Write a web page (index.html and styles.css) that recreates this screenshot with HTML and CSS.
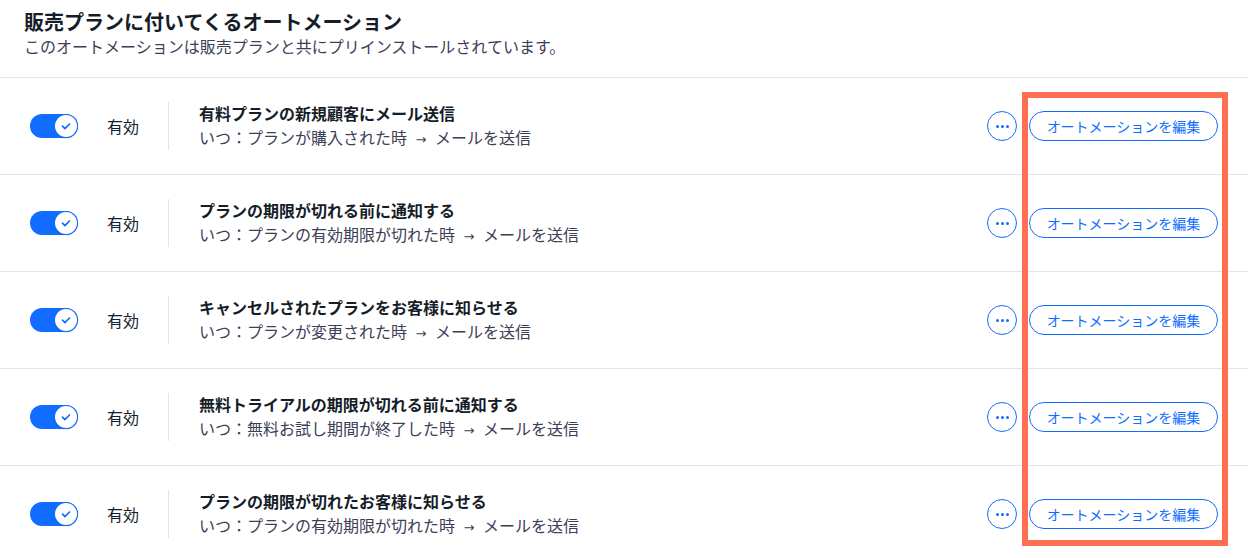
FILE: index.html
```html
<!DOCTYPE html>
<html lang="ja">
<head>
<meta charset="utf-8">
<link rel="stylesheet" href="styles.css">
</head>
<body>
<div class="page">
  <header class="head">
    <h1 class="head-title">販売プランに付いてくるオートメーション</h1>
    <p class="head-sub">このオートメーションは販売プランと共にプリインストールされています。</p>
  </header>
  <ul class="list">
    <li class="row">
      <span class="toggle"><span class="knob"><svg viewBox="0 0 14 14" width="14" height="14"><path d="M3.5 7.2l2.4 2.4L10.5 5" fill="none" stroke="#116dff" stroke-width="1.7" stroke-linecap="round" stroke-linejoin="round"/></svg></span></span>
      <span class="state">有効</span>
      <span class="sep"></span>
      <div class="info">
        <div class="name">有料プランの新規顧客にメール送信</div>
        <div class="desc">いつ：プランが購入された時 <span class="arrow">→</span> メールを送信</div>
      </div>
      <button class="more"><span></span><span></span><span></span></button>
      <button class="edit">オートメーションを編集</button>
    </li>
    <li class="row">
      <span class="toggle"><span class="knob"><svg viewBox="0 0 14 14" width="14" height="14"><path d="M3.5 7.2l2.4 2.4L10.5 5" fill="none" stroke="#116dff" stroke-width="1.7" stroke-linecap="round" stroke-linejoin="round"/></svg></span></span>
      <span class="state">有効</span>
      <span class="sep"></span>
      <div class="info">
        <div class="name">プランの期限が切れる前に通知する</div>
        <div class="desc">いつ：プランの有効期限が切れた時 <span class="arrow">→</span> メールを送信</div>
      </div>
      <button class="more"><span></span><span></span><span></span></button>
      <button class="edit">オートメーションを編集</button>
    </li>
    <li class="row">
      <span class="toggle"><span class="knob"><svg viewBox="0 0 14 14" width="14" height="14"><path d="M3.5 7.2l2.4 2.4L10.5 5" fill="none" stroke="#116dff" stroke-width="1.7" stroke-linecap="round" stroke-linejoin="round"/></svg></span></span>
      <span class="state">有効</span>
      <span class="sep"></span>
      <div class="info">
        <div class="name">キャンセルされたプランをお客様に知らせる</div>
        <div class="desc">いつ：プランが変更された時 <span class="arrow">→</span> メールを送信</div>
      </div>
      <button class="more"><span></span><span></span><span></span></button>
      <button class="edit">オートメーションを編集</button>
    </li>
    <li class="row">
      <span class="toggle"><span class="knob"><svg viewBox="0 0 14 14" width="14" height="14"><path d="M3.5 7.2l2.4 2.4L10.5 5" fill="none" stroke="#116dff" stroke-width="1.7" stroke-linecap="round" stroke-linejoin="round"/></svg></span></span>
      <span class="state">有効</span>
      <span class="sep"></span>
      <div class="info">
        <div class="name">無料トライアルの期限が切れる前に通知する</div>
        <div class="desc">いつ：無料お試し期間が終了した時 <span class="arrow">→</span> メールを送信</div>
      </div>
      <button class="more"><span></span><span></span><span></span></button>
      <button class="edit">オートメーションを編集</button>
    </li>
    <li class="row">
      <span class="toggle"><span class="knob"><svg viewBox="0 0 14 14" width="14" height="14"><path d="M3.5 7.2l2.4 2.4L10.5 5" fill="none" stroke="#116dff" stroke-width="1.7" stroke-linecap="round" stroke-linejoin="round"/></svg></span></span>
      <span class="state">有効</span>
      <span class="sep"></span>
      <div class="info">
        <div class="name">プランの期限が切れたお客様に知らせる</div>
        <div class="desc">いつ：プランの有効期限が切れた時 <span class="arrow">→</span> メールを送信</div>
      </div>
      <button class="more"><span></span><span></span><span></span></button>
      <button class="edit">オートメーションを編集</button>
    </li>
  </ul>
  <div class="highlight"></div>
</div>
</body>
</html>
```

FILE: styles.css
```css
* { box-sizing: border-box; }
html, body {
  margin: 0;
  padding: 0;
  background: #ffffff;
  font-family: "Noto Sans CJK JP", "Noto Sans", sans-serif;
  color: #151d29;
}
.page {
  position: relative;
  width: 1248px;
  height: 558px;
  overflow: hidden;
}
.head {
  height: 78px;
  padding: 9px 24px 0;
  border-bottom: 1px solid #dfe5eb;
}
.head-title {
  margin: 0;
  font-size: 20px;
  line-height: 26px;
  font-weight: 700;
  color: #151d29;
}
.head-sub {
  margin: 0;
  font-size: 16px;
  line-height: 22px;
  color: #3b4057;
}
.list {
  list-style: none;
  margin: 0;
  padding: 0;
}
.row {
  display: flex;
  align-items: center;
  height: 97px;
  padding: 0 30px;
  border-bottom: 1px solid #dfe5eb;
}
.toggle {
  position: relative;
  display: flex;
  align-items: center;
  justify-content: flex-end;
  width: 48px;
  height: 24px;
  border-radius: 12px;
  background: #116dff;
  padding: 1px;
  flex: none;
}
.knob {
  display: flex;
  align-items: center;
  justify-content: center;
  width: 22px;
  height: 22px;
  border-radius: 50%;
  background: #ffffff;
  box-shadow: 0 0 0 1px #116dff, 0 1px 2px rgba(0, 0, 0, 0.25);
}
.state {
  margin-left: 29px;
  font-size: 16px;
  line-height: 24px;
  color: #151d29;
  flex: none;
}
.sep {
  width: 1px;
  height: 48px;
  background: #dfe5eb;
  margin-left: 29px;
  flex: none;
}
.info {
  margin-left: 30px;
  flex: 1;
  display: flex;
  flex-direction: column;
}
.name {
  font-size: 16px;
  line-height: 24px;
  font-weight: 700;
  color: #151d29;
}
.desc {
  font-size: 16px;
  line-height: 24px;
  color: #3b4057;
}
.arrow {
  font-family: "DejaVu Sans", sans-serif;
  font-size: 13px;
  margin: 0 5px;
}
.more {
  display: flex;
  align-items: center;
  justify-content: center;
  gap: 2px;
  width: 30px;
  height: 30px;
  border-radius: 50%;
  border: 1px solid #116dff;
  background: #ffffff;
  padding: 0;
  flex: none;
}
.more span {
  width: 3px;
  height: 3px;
  border-radius: 50%;
  background: #116dff;
}
.edit {
  margin-left: 12px;
  width: 189px;
  height: 30px;
  border-radius: 15px;
  border: 1px solid #116dff;
  background: #ffffff;
  color: #116dff;
  font-family: "Noto Sans CJK JP", "Noto Sans", sans-serif;
  font-size: 14px;
  line-height: 28px;
  padding: 0;
  flex: none;
}
.highlight {
  position: absolute;
  left: 1022px;
  top: 92px;
  width: 206px;
  height: 454px;
  border: 6px solid #fe6f51;
}
```
